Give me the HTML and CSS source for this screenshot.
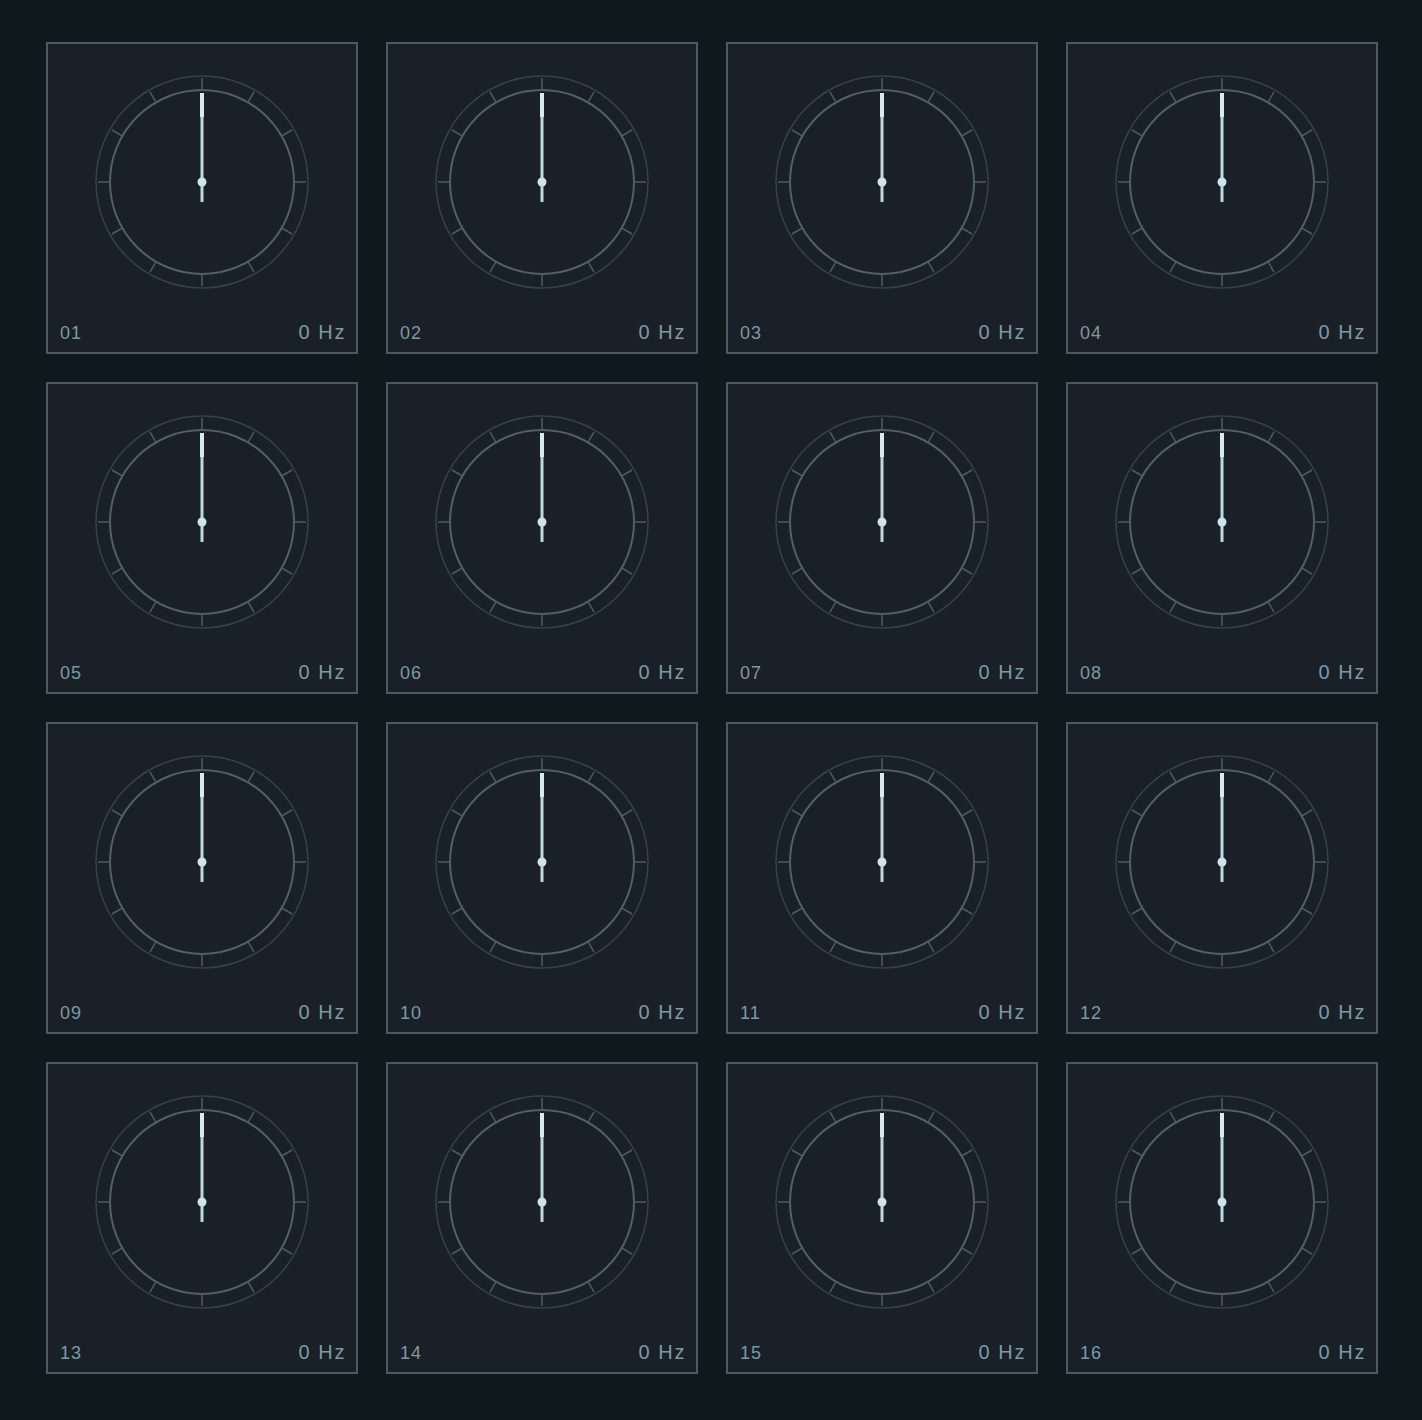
FILE: index.html
```html
<html>
  <head>
    <title>Oscillator Bank</title>
    <link rel="stylesheet" href="styles.css">
  </head>

  <body>
    <!-- one dial face, reused by every channel below -->
    <svg class="defs" width="0" height="0">
      <symbol id="dial" viewBox="-110 -110 220 220">
        <circle class="dial-outer" r="106" />
        <circle class="dial-inner" r="92" />
        <g class="dial-ticks">
          <line x1="0" y1="-92" x2="0" y2="-104" />
          <line x1="0" y1="-92" x2="0" y2="-104" transform="rotate(30)" />
          <line x1="0" y1="-92" x2="0" y2="-104" transform="rotate(60)" />
          <line x1="0" y1="-92" x2="0" y2="-104" transform="rotate(90)" />
          <line x1="0" y1="-92" x2="0" y2="-104" transform="rotate(120)" />
          <line x1="0" y1="-92" x2="0" y2="-104" transform="rotate(150)" />
          <line x1="0" y1="-92" x2="0" y2="-104" transform="rotate(180)" />
          <line x1="0" y1="-92" x2="0" y2="-104" transform="rotate(210)" />
          <line x1="0" y1="-92" x2="0" y2="-104" transform="rotate(240)" />
          <line x1="0" y1="-92" x2="0" y2="-104" transform="rotate(270)" />
          <line x1="0" y1="-92" x2="0" y2="-104" transform="rotate(300)" />
          <line x1="0" y1="-92" x2="0" y2="-104" transform="rotate(330)" />
        </g>
        <g class="dial-needle">
          <line class="needle-shaft" x1="0" y1="-66" x2="0" y2="20" />
          <line class="needle-tip" x1="0" y1="-89" x2="0" y2="-65" />
          <circle class="needle-hub" r="4.5" />
        </g>
      </symbol>
    </svg>

    <div class="bank">
      <div class="channel">
        <svg class="dial"><use href="#dial" /></svg>
        <div class="channel-footer"><span class="channel-id">01</span><span class="channel-freq">0 Hz</span></div>
      </div>
      <div class="channel">
        <svg class="dial"><use href="#dial" /></svg>
        <div class="channel-footer"><span class="channel-id">02</span><span class="channel-freq">0 Hz</span></div>
      </div>
      <div class="channel">
        <svg class="dial"><use href="#dial" /></svg>
        <div class="channel-footer"><span class="channel-id">03</span><span class="channel-freq">0 Hz</span></div>
      </div>
      <div class="channel">
        <svg class="dial"><use href="#dial" /></svg>
        <div class="channel-footer"><span class="channel-id">04</span><span class="channel-freq">0 Hz</span></div>
      </div>
      <div class="channel">
        <svg class="dial"><use href="#dial" /></svg>
        <div class="channel-footer"><span class="channel-id">05</span><span class="channel-freq">0 Hz</span></div>
      </div>
      <div class="channel">
        <svg class="dial"><use href="#dial" /></svg>
        <div class="channel-footer"><span class="channel-id">06</span><span class="channel-freq">0 Hz</span></div>
      </div>
      <div class="channel">
        <svg class="dial"><use href="#dial" /></svg>
        <div class="channel-footer"><span class="channel-id">07</span><span class="channel-freq">0 Hz</span></div>
      </div>
      <div class="channel">
        <svg class="dial"><use href="#dial" /></svg>
        <div class="channel-footer"><span class="channel-id">08</span><span class="channel-freq">0 Hz</span></div>
      </div>
      <div class="channel">
        <svg class="dial"><use href="#dial" /></svg>
        <div class="channel-footer"><span class="channel-id">09</span><span class="channel-freq">0 Hz</span></div>
      </div>
      <div class="channel">
        <svg class="dial"><use href="#dial" /></svg>
        <div class="channel-footer"><span class="channel-id">10</span><span class="channel-freq">0 Hz</span></div>
      </div>
      <div class="channel">
        <svg class="dial"><use href="#dial" /></svg>
        <div class="channel-footer"><span class="channel-id">11</span><span class="channel-freq">0 Hz</span></div>
      </div>
      <div class="channel">
        <svg class="dial"><use href="#dial" /></svg>
        <div class="channel-footer"><span class="channel-id">12</span><span class="channel-freq">0 Hz</span></div>
      </div>
      <div class="channel">
        <svg class="dial"><use href="#dial" /></svg>
        <div class="channel-footer"><span class="channel-id">13</span><span class="channel-freq">0 Hz</span></div>
      </div>
      <div class="channel">
        <svg class="dial"><use href="#dial" /></svg>
        <div class="channel-footer"><span class="channel-id">14</span><span class="channel-freq">0 Hz</span></div>
      </div>
      <div class="channel">
        <svg class="dial"><use href="#dial" /></svg>
        <div class="channel-footer"><span class="channel-id">15</span><span class="channel-freq">0 Hz</span></div>
      </div>
      <div class="channel">
        <svg class="dial"><use href="#dial" /></svg>
        <div class="channel-footer"><span class="channel-id">16</span><span class="channel-freq">0 Hz</span></div>
      </div>
    </div>
  </body>
</html>
```

FILE: styles.css
```css
body {
  margin: 0;
  background: #0e181d;
  font-family: "Liberation Sans", Arial, sans-serif;
}

.defs {
  position: absolute;
  width: 0;
  height: 0;
}

.bank {
  display: grid;
  grid-template-columns: repeat(4, 312px);
  gap: 28px;
  padding: 42px 44px 46px 46px;
}

.channel {
  display: flex;
  flex-direction: column;
  box-sizing: border-box;
  height: 312px;
  border: 2px solid #4a5a61;
  background: #192027;
}

.dial {
  display: block;
  width: 220px;
  height: 220px;
  margin: 28px auto 0;
}

.dial-outer {
  fill: none;
  stroke: #33444b;
  stroke-width: 1.5;
}

.dial-inner {
  fill: none;
  stroke: #4e6169;
  stroke-width: 2;
}

.dial-ticks line {
  stroke: #4a5c63;
  stroke-width: 1.5;
}

.needle-shaft {
  stroke: #bfd8e0;
  stroke-width: 3;
}

.needle-tip {
  stroke: #d6ebf0;
  stroke-width: 4;
}

.needle-hub {
  fill: #cfe4ea;
}

.channel-footer {
  display: flex;
  justify-content: space-between;
  align-items: baseline;
  margin-top: auto;
  padding: 0 10px 10px 12px;
  line-height: 18px;
  color: #7f99a4;
}

.channel-id {
  font-size: 18px;
  letter-spacing: 0.06em;
}

.channel-freq {
  font-size: 20px;
  letter-spacing: 0.08em;
}
```
